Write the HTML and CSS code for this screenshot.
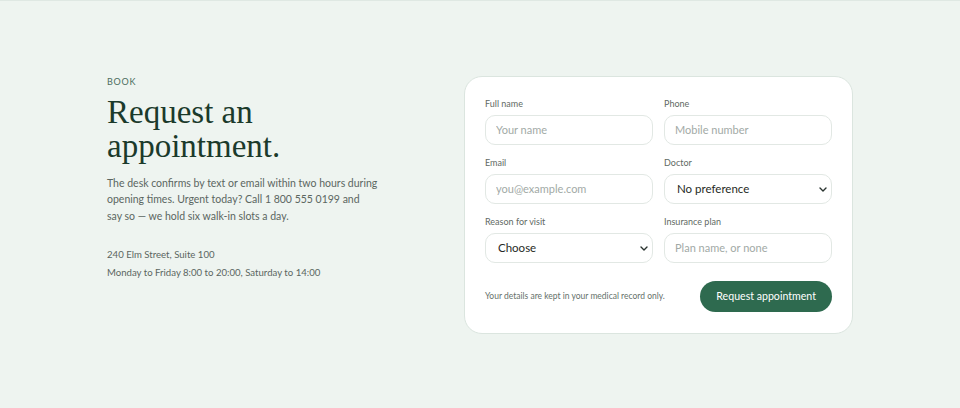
FILE: index.html
```html
<!DOCTYPE html>
<html lang="en">
<head>
<meta charset="utf-8">
<title>Request an appointment</title>
<link rel="stylesheet" href="styles.css">
</head>
<body>
<main class="page">
  <div class="wrap">
    <section class="intro">
      <p class="eyebrow">BOOK</p>
      <h1 class="title">Request an appointment.</h1>
      <p class="lead">The desk confirms by text or email within two hours during opening times. Urgent today? Call 1 800 555 0199 and <span class="nowrap">say so</span> — we hold six walk-in slots a day.</p>
      <p class="meta">240 Elm Street, Suite 100<br>Monday to Friday 8:00 to 20:00, Saturday to 14:00</p>
    </section>
    <form class="card">
      <div class="grid">
        <label class="field">
          <span class="label">Full name</span>
          <input class="control" type="text" placeholder="Your name">
        </label>
        <label class="field">
          <span class="label">Phone</span>
          <input class="control" type="tel" placeholder="Mobile number">
        </label>
        <label class="field">
          <span class="label">Email</span>
          <input class="control" type="email" placeholder="you@example.com">
        </label>
        <label class="field">
          <span class="label">Doctor</span>
          <span class="select-wrap">
            <select class="control select"><option>No preference</option></select>
            <svg class="chevron" viewBox="0 0 8 5" width="8" height="5" aria-hidden="true"><path d="M1 1l3 3 3-3" fill="none" stroke="#2a3430" stroke-width="1.4" stroke-linecap="round" stroke-linejoin="round"/></svg>
          </span>
        </label>
        <label class="field">
          <span class="label">Reason for visit</span>
          <span class="select-wrap">
            <select class="control select"><option>Choose</option></select>
            <svg class="chevron" viewBox="0 0 8 5" width="8" height="5" aria-hidden="true"><path d="M1 1l3 3 3-3" fill="none" stroke="#2a3430" stroke-width="1.4" stroke-linecap="round" stroke-linejoin="round"/></svg>
          </span>
        </label>
        <label class="field">
          <span class="label">Insurance plan</span>
          <input class="control" type="text" placeholder="Plan name, or none">
        </label>
      </div>
      <div class="footer">
        <p class="note">Your details are kept in your medical record only.</p>
        <button class="button" type="button">Request appointment</button>
      </div>
    </form>
  </div>
</main>
</body>
</html>
```
FILE: styles.css
```css
* { box-sizing: border-box; }
html, body { margin: 0; padding: 0; }
body {
  background: #eef4f0;
  border-top: 1px solid #dfe8e3;
  font-family: "Lato", "Noto Sans", sans-serif;
  color: #2a3530;
}
.page {
  min-height: 407px;
  display: flex;
  align-items: center;
  justify-content: center;
}
.wrap {
  width: 746px;
  display: grid;
  grid-template-columns: 1fr 389px;
  gap: 68px;
  align-items: start;
}
.eyebrow {
  margin: 0 0 8px;
  font-size: 9px;
  line-height: 11px;
  letter-spacing: 0.08em;
  color: #4c6e5e;
}
.title {
  margin: 0 0 12px;
  font-family: "Liberation Serif", "DejaVu Serif", serif;
  font-weight: 400;
  font-size: 33px;
  line-height: 34px;
  color: #1b3a2b;
  max-width: 260px;
}
.lead {
  margin: 0 0 22px;
  font-size: 10.5px;
  line-height: 16.5px;
  color: #5b6661;
  max-width: 276px;
}
.nowrap { white-space: nowrap; }
.meta {
  margin: 0;
  font-size: 9.6px;
  line-height: 18px;
  color: #5b6661;
}
.card {
  background: #ffffff;
  border: 1px solid #dbe5df;
  border-radius: 18px;
  padding: 21px 20px;
}
.grid {
  display: grid;
  grid-template-columns: 1fr 1fr;
  column-gap: 11px;
  row-gap: 12px;
}
.field { display: flex; flex-direction: column; }
.label {
  font-size: 9px;
  line-height: 12px;
  margin-bottom: 5px;
  color: #5f6a64;
}
.control {
  width: 100%;
  height: 30px;
  border: 1px solid #e2e8e4;
  border-radius: 10px;
  background: #ffffff;
  padding: 0 10px;
  font-family: inherit;
  font-size: 11px;
  color: #1f2a25;
  outline: none;
}
.control::placeholder { color: #a2aaa6; }
.select-wrap { position: relative; display: block; }
.select {
  -webkit-appearance: none;
  appearance: none;
  padding: 0 24px 0 12px;
  font-size: 11.5px;
}
.chevron {
  position: absolute;
  right: 5px;
  top: 13px;
  pointer-events: none;
}
.footer {
  margin-top: 18px;
  display: flex;
  align-items: center;
  justify-content: space-between;
}
.note {
  margin: 0;
  font-size: 8.5px;
  color: #66716b;
}
.button {
  height: 31px;
  padding: 0 16px;
  border: 0;
  border-radius: 16px;
  background: #2e6a4f;
  color: #ffffff;
  font-family: inherit;
  font-size: 10.6px;
}
```
